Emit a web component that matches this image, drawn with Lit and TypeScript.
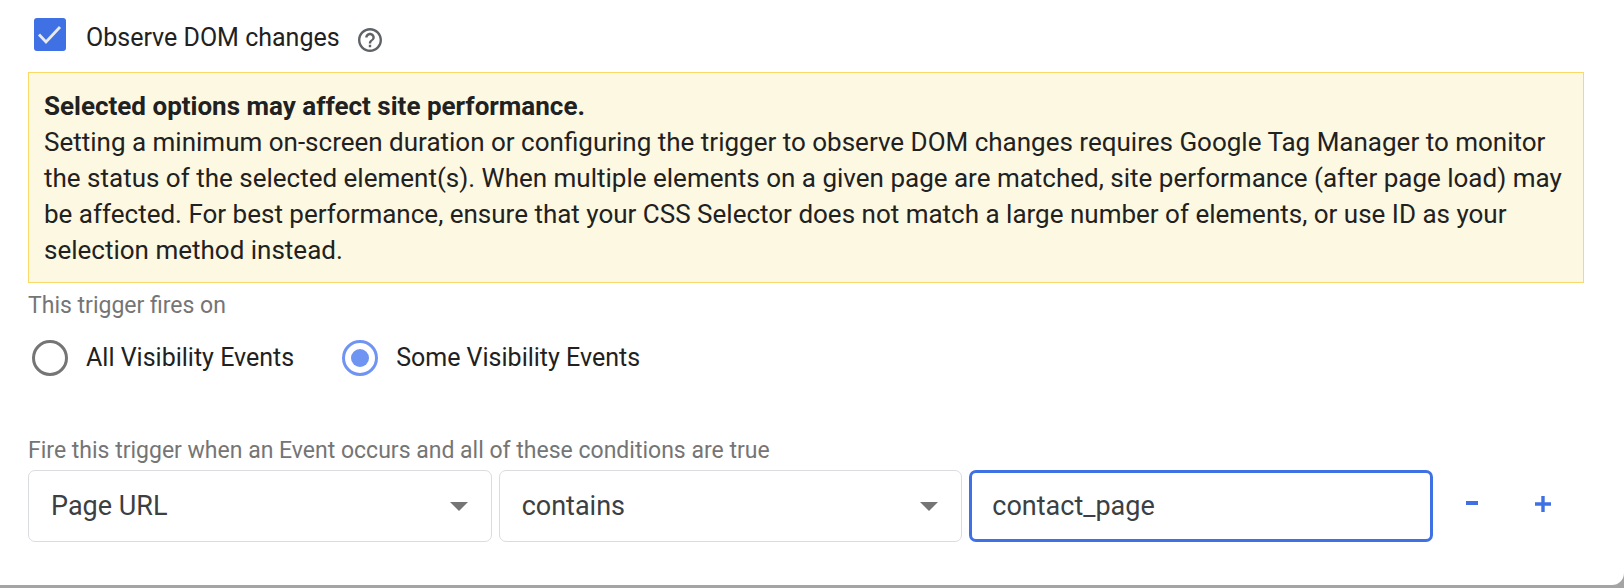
import { LitElement, html, css } from "lit";
import { customElement, state } from "lit/decorators.js";

@customElement("app-root")
export class AppRoot extends LitElement {
  @state() private observeDom = true;
  @state() private firesOn = "some";
  @state() private value = "contact_page";

  static styles = css`
    :host {
      display: block;
      background: #a4a4a4;
      padding-bottom: 3px;
      font-family: Roboto, "Open Sans", sans-serif;
      font-size: 25px;
      line-height: 36px;
      color: #212121;
    }
    * {
      box-sizing: border-box;
    }
    .card {
      background: #fff;
      border-bottom-right-radius: 12px;
      padding: 16px 40px 43px 28px;
    }
    .row {
      display: flex;
      align-items: center;
    }
    .observe {
      height: 44px;
      padding-left: 6px;
      margin-bottom: 12px;
    }
    .option {
      display: flex;
      align-items: center;
      cursor: pointer;
    }
    input,
    select,
    button {
      appearance: none;
      margin: 0;
      font: inherit;
      outline: none;
    }
    .tick {
      display: grid;
      width: 32px;
      height: 33px;
      margin-right: 20px;
      margin-bottom: 8px;
      flex: none;
    }
    .tick > * {
      grid-area: 1 / 1;
      width: 100%;
      height: 100%;
    }
    .tick input {
      border: 3px solid #757575;
      border-radius: 3px;
    }
    .tick input:checked {
      background: #3f70e4;
      border-color: #3f70e4;
    }
    .tick svg {
      pointer-events: none;
    }
    .help {
      display: grid;
      place-items: center;
      width: 24px;
      height: 24px;
      margin-left: 18px;
      margin-top: 3px;
      padding: 0;
      border: 0;
      background: none;
    }
    .notice {
      border: 1px solid #f9d967;
      background: #fdf8e2;
      padding: 15px 15px 14px;
    }
    .notice p,
    .notice h2 {
      margin: 0;
      font-size: 26px;
    }
    .notice h2 {
      font-weight: 700;
    }
    fieldset {
      border: 0;
      margin: 0;
      padding: 0;
      min-width: 0;
    }
    .caption {
      display: block;
      padding: 0;
      font-size: 23px;
      line-height: 28px;
      color: #757575;
    }
    legend.caption {
      padding-top: 9px;
    }
    .radios {
      gap: 48px;
      padding: 20px 0 0 4px;
    }
    .option input[type="radio"] {
      display: grid;
      place-items: center;
      width: 36px;
      height: 36px;
      margin-right: 18px;
      border: 3px solid #757575;
      border-radius: 50%;
    }
    .option input[type="radio"]:checked {
      border-color: #7094f2;
    }
    .option input[type="radio"]:checked::before {
      content: "";
      width: 18px;
      height: 18px;
      border-radius: 50%;
      background: #7094f2;
    }
    .conditions {
      padding-top: 61px;
    }
    .condition {
      display: grid;
      grid-template-columns: repeat(3, minmax(0, 1fr)) 64px 64px;
      gap: 7px;
      align-items: center;
      margin: 5px 9px 0 0;
    }
    .field {
      width: 100%;
      height: 72px;
      padding: 0 22px;
      border: 1px solid #dadce0;
      border-radius: 7px;
      background: #fff;
      color: #3c4043;
      font-size: 27px;
    }
    .picker {
      display: grid;
      align-items: center;
    }
    .picker > * {
      grid-area: 1 / 1;
    }
    .picker svg {
      justify-self: end;
      margin-right: 24px;
      pointer-events: none;
    }
    .text {
      border: 3px solid #3f70e4;
      padding: 0 20px;
    }
    .step {
      display: grid;
      place-items: center;
      height: 64px;
      padding: 0;
      border: 0;
      background: none;
      color: #3f70e4;
      cursor: pointer;
    }
  `;

  private picker(label: string, options: string[]) {
    return html`<div class="picker">
      <select class="field" aria-label=${label}>
        ${options.map((o) => html`<option>${o}</option>`)}
      </select>
      <svg width="18" height="9" viewBox="0 0 18 9" aria-hidden="true">
        <path d="M0 0h18L9 9z" fill="#757575" />
      </svg>
    </div>`;
  }

  private radio(value: string, label: string) {
    return html`<label class="option">
      <input
        type="radio"
        name="fires"
        .value=${value}
        .checked=${this.firesOn === value}
        @change=${() => (this.firesOn = value)}
      />
      ${label}
    </label>`;
  }

  render() {
    return html`
      <main class="card">
        <div class="row observe">
          <label class="option">
            <span class="tick">
              <input
                type="checkbox"
                .checked=${this.observeDom}
                @change=${(e: Event) =>
                  (this.observeDom = (e.target as HTMLInputElement).checked)}
              />
              <svg viewBox="0 0 32 33" aria-hidden="true">
                <path
                  d="M5 16.5l7 7.5L26 9"
                  fill="none"
                  stroke="#e8eaed"
                  stroke-width="2.8"
                />
              </svg>
            </span>
            Observe DOM changes
          </label>
          <button class="help" aria-label="Help">
            <svg width="24" height="24" viewBox="2 2 20 20" aria-hidden="true">
              <path
                fill="#5f6368"
                d="M11 18h2v-2h-2v2zm1-16C6.48 2 2 6.48 2 12s4.480 10 10 10 10-4.480 10-10S17.520 2 12 2zm0 18c-4.410 0-8-3.590-8-8s3.590-8 8-8 8 3.590 8 8-3.590 8-8 8zm0-14c-2.210 0-4 1.790-4 4h2c0-1.100.9-2 2-2s2 .9 2 2c0 2-3 1.750-3 5h2c0-2.250 3-2.500 3-5 0-2.210-1.790-4-4-4z"
              />
            </svg>
          </button>
        </div>
        <section class="notice">
          <h2>Selected options may affect site performance.</h2>
          <p>
            Setting a minimum on-screen duration or configuring the trigger to
            observe DOM changes requires Google Tag Manager to monitor the
            status of the selected element(s). When multiple elements on a given
            page are matched, site performance (after page load) may be
            affected. For best performance, ensure that your CSS Selector does
            not match a large number of elements, or use ID as your selection
            method instead.
          </p>
        </section>
        <fieldset>
          <legend class="caption">This trigger fires on</legend>
          <div class="row radios">
            ${this.radio("all", "All Visibility Events")}
            ${this.radio("some", "Some Visibility Events")}
          </div>
        </fieldset>
        <section class="conditions">
          <span class="caption"
            >Fire this trigger when an Event occurs and all of these conditions
            are true</span
          >
          <div class="condition">
            ${this.picker("Variable", ["Page URL"])}
            ${this.picker("Operator", ["contains"])}
            <input
              class="field text"
              type="text"
              aria-label="Value"
              .value=${this.value}
              @input=${(e: Event) =>
                (this.value = (e.target as HTMLInputElement).value)}
            />
            <button class="step" aria-label="Remove condition">
              <svg width="16" height="24" viewBox="0 0 16 24" aria-hidden="true">
                <path d="M2 7h12v4H2z" fill="currentColor" />
              </svg>
            </button>
            <button class="step" aria-label="Add condition">
              <svg width="16" height="24" viewBox="0 0 16 24" aria-hidden="true">
                <path
                  d="M6.300 2h3.400v6.300h6.300v3.400h-6.300V18H6.300v-6.300H0V8.300h6.300z"
                  fill="currentColor"
                />
              </svg>
            </button>
          </div>
        </section>
      </main>
    `;
  }
}
